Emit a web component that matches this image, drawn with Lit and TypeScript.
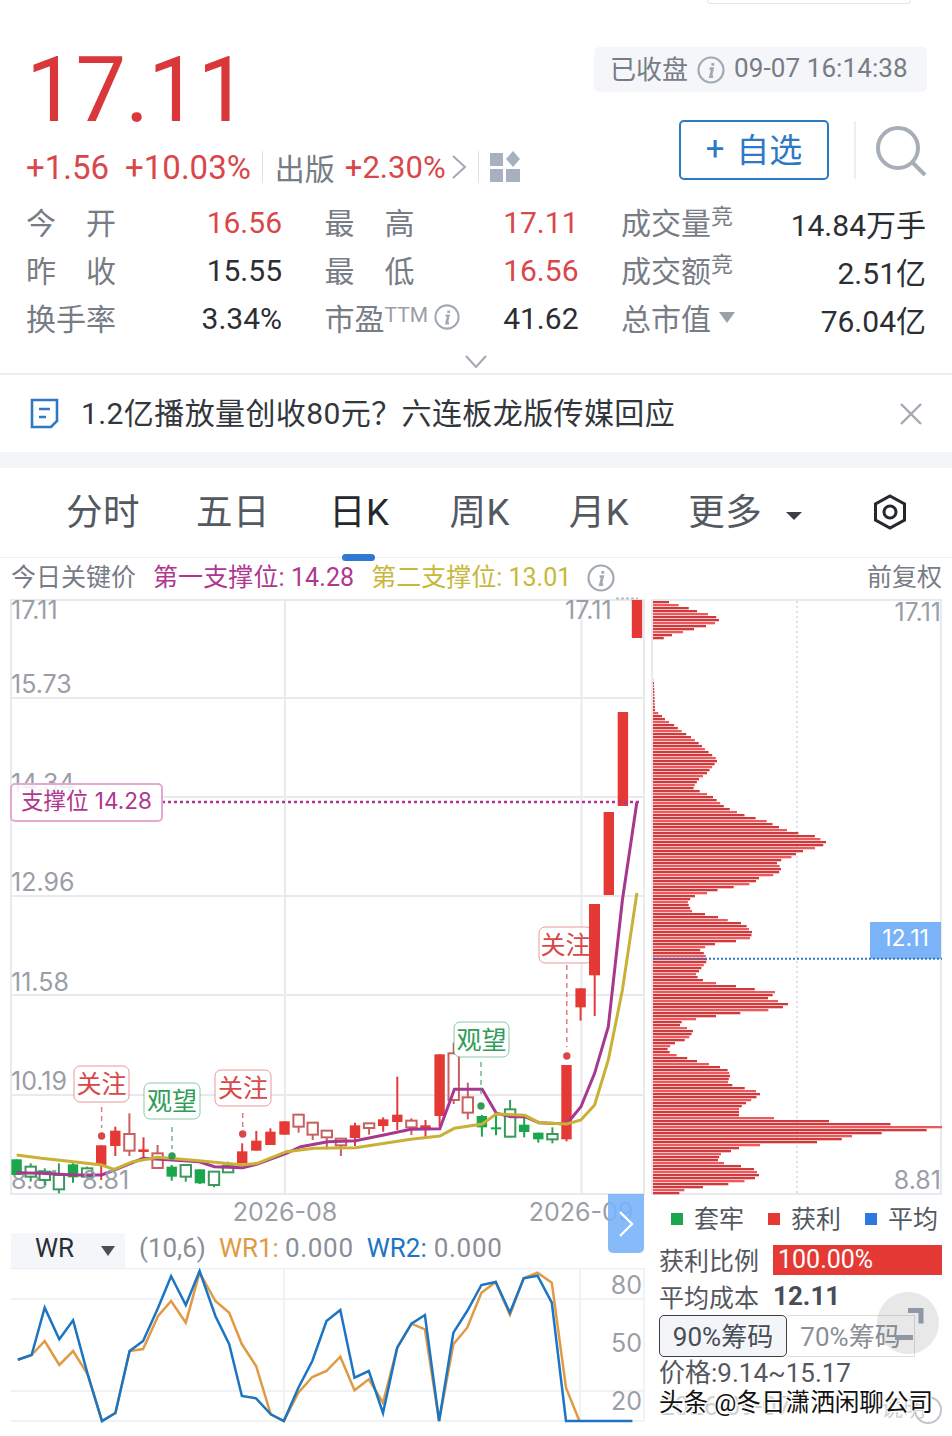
import { LitElement, html, css, svg } from 'lit';
import { customElement } from 'lit/decorators.js';

const RED = '#e53935';
const GREEN = '#1aa64b';

// px values below were read from the reference: y = 900 + py / 3
type Candle = [string, number, number, number, number];
const candles: Candle[] = [
  ['g', 778, 825, 778, 825],
  ['h', 800, 830, 790, 845],
  ['h', 815, 840, 805, 855],
  ['h', 825, 868, 790, 880],
  ['g', 793, 832, 790, 848],
  ['h', 805, 830, 800, 835],
  ['r', 736, 795, 736, 840],
  ['r', 692, 738, 680, 768],
  ['o', 702, 752, 640, 768],
  ['r', 748, 756, 712, 778],
  ['o', 760, 804, 735, 806],
  ['g', 800, 830, 795, 842],
  ['h', 795, 830, 795, 845],
  ['g', 808, 850, 808, 852],
  ['h', 815, 855, 815, 862],
  ['h', 797, 817, 785, 817],
  ['r', 754, 790, 730, 790],
  ['r', 722, 752, 693, 752],
  ['r', 695, 735, 685, 735],
  ['r', 664, 704, 664, 704],
  ['o', 644, 680, 644, 698],
  ['o', 668, 704, 668, 720],
  ['o', 692, 712, 692, 748],
  ['o', 716, 736, 716, 768],
  ['r', 676, 714, 668, 738],
  ['o', 670, 684, 670, 704],
  ['r', 658, 678, 652, 695],
  ['r', 644, 666, 530, 690],
  ['o', 662, 682, 655, 705],
  ['r', 676, 690, 660, 712],
  ['r', 463, 648, 463, 680],
  ['o', 460, 600, 428, 612],
  ['o', 592, 638, 548, 658],
  ['g', 648, 682, 645, 710],
  ['g', 682, 688, 640, 706],
  ['h', 628, 710, 600, 712],
  ['g', 674, 696, 645, 712],
  ['g', 698, 718, 698, 728],
  ['h', 702, 718, 682, 730],
  ['r', 495, 718, 495, 724],
  ['r', 265, 322, 265, 362],
  ['r', 12, 226, 12, 348],
  ['r', -264, -15, -264, -15],
  ['r', -564, -282, -564, -282],
  ['r', -900, -786, -900, -786],
];

const purple: number[][] = [[40, 818], [100, 820], [177, 825], [245, 825], [275, 810], [345, 775], [415, 780], [480, 785], [517, 800], [585, 803], [620, 792], [690, 760], [725, 740], [790, 725], [857, 722], [925, 705], [990, 688], [1060, 686], [1095, 568], [1162, 568], [1196, 640], [1231, 650], [1265, 650], [1299, 668], [1366, 672], [1400, 620], [1433, 520], [1466, 380], [1500, 0], [1535, -294]];
const yellow: number[][] = [[40, 765], [100, 775], [177, 785], [245, 795], [275, 808], [320, 785], [380, 772], [480, 782], [585, 795], [620, 790], [690, 755], [757, 745], [857, 743], [990, 718], [1060, 708], [1095, 685], [1162, 672], [1196, 642], [1265, 646], [1299, 668], [1366, 672], [1400, 660], [1433, 615], [1466, 480], [1500, 270], [1535, -21]];

// WR lines: x = px / 2.53, y = 1200 + py / 3
const wr2: number[][] = [[45, 476], [80, 462], [113, 320], [150, 415], [185, 358], [222, 520], [258, 660], [292, 636], [328, 450], [362, 420], [400, 320], [433, 226], [470, 312], [505, 210], [545, 345], [580, 430], [612, 585], [648, 592], [685, 640], [718, 660], [755, 560], [790, 480], [826, 360], [861, 327], [897, 530], [933, 510], [969, 636], [1005, 440], [1041, 368], [1075, 342], [1111, 660], [1147, 395], [1182, 330], [1218, 252], [1254, 243], [1290, 335], [1325, 232], [1360, 224], [1396, 305], [1432, 660], [1600, 660]];
const wr1: number[][] = [[45, 476], [80, 462], [113, 420], [150, 492], [185, 450], [222, 520], [258, 660], [292, 636], [328, 450], [362, 444], [400, 345], [433, 300], [470, 365], [505, 215], [545, 300], [580, 335], [612, 430], [648, 495], [685, 640], [718, 660], [755, 575], [790, 528], [826, 510], [861, 467], [897, 568], [933, 535], [969, 605], [1005, 440], [1041, 368], [1075, 385], [1111, 660], [1147, 430], [1182, 380], [1218, 275], [1254, 243], [1290, 342], [1325, 232], [1360, 215], [1396, 245], [1432, 560], [1466, 660]];

// chip profile as [real y, width]
const profile: number[][] = [
  [601, 10], [605, 22], [608, 33], [612, 44], [615, 55], [619, 66], [622, 62], [625, 53], [628, 41], [631, 30], [634, 19], [638, 8], [639, 0],
  [680, 0], [684, 1], [711, 2], [713, 4], [717, 9], [722, 14], [725, 20], [730, 26], [733, 30], [738, 38], [745, 47], [750, 52], [755, 58], [760, 64], [765, 60], [772, 54], [778, 46], [785, 41], [790, 40], [793, 50], [798, 60], [803, 66], [808, 72], [813, 84], [817, 94], [820, 107], [823, 117], [827, 122], [829, 130], [833, 138], [836, 160], [843, 173], [847, 162], [850, 150], [853, 143], [857, 137], [860, 124], [865, 124], [868, 128], [873, 125], [877, 106], [882, 101], [885, 87], [888, 68], [892, 54], [895, 42], [900, 34],
  [907, 36], [912, 39], [915, 52], [918, 65], [922, 78], [925, 93], [928, 94], [933, 99], [937, 97], [940, 83], [943, 62], [947, 49], [950, 46], [955, 52], [960, 54], [965, 50], [970, 46], [975, 41], [980, 47], [983, 56], [986, 77], [989, 95], [993, 122], [996, 115], [1000, 115], [1004, 135], [1008, 125], [1011, 96], [1014, 70], [1017, 49], [1020, 31], [1023, 24], [1027, 28], [1031, 40], [1035, 37], [1038, 35], [1042, 22], [1047, 14], [1052, 15], [1055, 20], [1058, 31], [1062, 44], [1066, 60], [1070, 74], [1075, 77], [1080, 75], [1085, 75], [1088, 88], [1092, 103], [1094, 107], [1098, 100], [1102, 93], [1107, 86], [1112, 86], [1117, 86], [1119, 121], [1122, 176], [1126, 258], [1128, 289], [1131, 243], [1134, 200], [1137, 197], [1141, 164], [1144, 107], [1147, 86], [1150, 78], [1153, 68], [1158, 65], [1162, 65], [1166, 77], [1168, 99], [1172, 103], [1175, 106], [1178, 100], [1182, 83], [1185, 60], [1187, 40], [1190, 27], [1193, 26],
];

function chipAt(y: number) {
  for (let i = 0; i < profile.length - 1; i++) {
    const [y0, w0] = profile[i];
    const [y1, w1] = profile[i + 1];
    if (y >= y0 && y <= y1) return w0 + ((w1 - w0) * (y - y0)) / (y1 - y0);
  }
  return 0;
}

// a row covers 3px, so take the widest value inside it or the peaks get lost
function chipWidth(y: number) {
  return Math.max(chipAt(y), chipAt(y + 1), chipAt(y + 2));
}

const mainPoints = (pts: number[][]) =>
  pts.map(([x, y]) => `${(x / 2.41).toFixed(1)},${(900 + y / 3).toFixed(1)}`).join(' ');
const wrPoints = (pts: number[][]) =>
  pts.map(([x, y]) => `${(x / 2.53).toFixed(1)},${(1200 + y / 3).toFixed(1)}`).join(' ');

const infoIcon = (size: number) => html`<svg class="info" width=${size} height=${size} viewBox="0 0 28 28">
  <circle cx="14" cy="14" r="12.5" fill="none" stroke="#a3a9b3" stroke-width="2.2"></circle>
  <path d="M15.8 7v2.8M12.6 12.6h2.9l-2 8h2.6" fill="none" stroke="#a3a9b3" stroke-width="2.8"></path>
</svg>`;

function marker(label: string, color: string, x0: number, x1: number, y0: number, y1: number, dash0: number, dash1: number, dotX: number, dotY: number) {
  return svg`
    <rect x=${x0} y=${y0} width=${x1 - x0} height=${y1 - y0} rx="6" fill="#fff" stroke=${color} stroke-opacity="0.55" stroke-width="1"></rect>
    <text class="mark" x=${(x0 + x1) / 2} y=${(y0 + y1) / 2 + 9} text-anchor="middle" fill=${color}>${label}</text>
    <line x1=${dotX} x2=${dotX} y1=${dash0} y2=${dash1} stroke=${color} stroke-width="1.5" stroke-dasharray="5 4" stroke-opacity="0.7"></line>
    <circle cx=${dotX} cy=${dotY} r="3.7" fill=${color}></circle>`;
}

@customElement('app-root')
export class AppRoot extends LitElement {
  static styles = css`
    :host {
      display: block;
      position: relative;
      width: 952px;
      height: 1436px;
      overflow: hidden;
      background: #fff;
      color: #333;
      font-family: Roboto, "Noto Sans CJK SC", sans-serif;
    }
    svg { display: block; }
    .info { flex: none; }
    .pill {
      width: 204px;
      height: 4px;
      margin-left: 707px;
      border: 1px solid #e4e6ea;
      border-top: none;
      border-radius: 0 0 10px 10px;
      box-sizing: border-box;
    }
    .head {
      height: 196px;
      padding: 0 25px 0 26px;
      display: flex;
      justify-content: space-between;
    }
    .left { padding-top: 42px; }
    .price {
      font-size: 90px;
      line-height: 90px;
      color: #d9373a;
      letter-spacing: -1px;
    }
    .change {
      margin-top: 11px;
      height: 40px;
      display: flex;
      align-items: center;
      font-size: 33px;
      color: #d9474a;
      white-space: nowrap;
    }
    .change .rate { margin-left: 16px; }
    .change .sub { font-size: 31px; }
    .vsep { width: 1px; height: 32px; background: #dfe1e5; margin: 0 12px 0 11px; }
    .vsep.tight { margin: 0 6px 0 11px; }
    .change .sector { color: #777c85; font-size: 30px; margin-right: 10px; }
    .change svg { margin-left: 5px; }
    .right {
      padding-top: 43px;
      display: flex;
      flex-direction: column;
      align-items: flex-end;
    }
    .chip {
      width: 333px;
      height: 45px;
      box-sizing: border-box;
      padding: 0 16px 4px;
      border-radius: 5px;
      background: #f4f6f9;
      display: flex;
      align-items: center;
      gap: 9px;
      font-size: 26px;
      color: #777c85;
      white-space: nowrap;
    }
    .chip .info { margin-top: 4px; }
    .chip .time { letter-spacing: 0.1px; }
    .actions {
      margin-top: 28px;
      height: 60px;
      display: flex;
      align-items: center;
    }
    .follow {
      width: 150px;
      height: 60px;
      box-sizing: border-box;
      border: 2px solid #2f78c4;
      border-radius: 5px;
      color: #2f78c4;
      font-size: 33px;
      padding-bottom: 4px;
      display: flex;
      align-items: center;
      justify-content: center;
      gap: 12px;
    }
    .actions .line { width: 2px; height: 58px; background: #eceef1; margin: 0 19px 0 25px; }
    .search { margin-top: 4px; }
    .stats {
      margin: -3px 0 3px;
      padding: 0 26px;
      display: grid;
      grid-template-columns: 256px 254px 305px;
      column-gap: 42.5px;
      grid-auto-rows: 48px;
      font-size: 30px;
      color: #2b2e33;
    }
    .cell { display: flex; align-items: center; justify-content: space-between; }
    .label { color: #777c85; display: flex; align-items: center; }
    .label.wide { width: 90px; justify-content: space-between; }
    .val { padding-top: 3px; }
    .val.up { color: #d9474a; }
    .sup { font-size: 22px; line-height: 1; align-self: flex-start; margin-top: 7px; }
    .ttm { font-size: 21px; color: #9a9ea6; align-self: flex-start; margin-top: 8px; margin-right: 6px; }
    .tri { width: 0; height: 0; border: 8px solid transparent; border-top: 11px solid #9ba1ab; border-bottom: none; margin-left: 8px; }
    .more {
      height: 31px;
      border-bottom: 2px solid #eceef1;
      display: flex;
      justify-content: center;
      align-items: center;
      padding-top: 6px;
      box-sizing: border-box;
    }
    .news {
      height: 77px;
      padding: 0 30px;
      display: flex;
      align-items: center;
      font-size: 30px;
      line-height: 40px;
      color: #33363b;
    }
    .news .txt { flex: 1; margin-left: 22px; letter-spacing: 0.4px; }
    .band { height: 16px; background: #f3f5f7; }
    .tabs {
      position: relative;
      height: 90px;
      box-sizing: border-box;
      padding: 0 0 0 66px;
      border-bottom: 1px solid #eceef1;
      display: flex;
      align-items: center;
      gap: 56px;
      font-size: 36.5px;
      letter-spacing: 0.5px;
      line-height: 44px;
      color: #54585f;
    }
    .tab.on { color: #26282c; position: relative; margin: 0 4px 0 3px; }
    .tab.on::after {
      content: "";
      position: absolute;
      left: 13px;
      right: 14px;
      bottom: -26px;
      height: 7px;
      border-radius: 4px;
      background: #2f78d4;
    }
    .tab.nudge { margin-left: 3px; }
    .moretab { display: flex; align-items: center; gap: 24px; }
    .moretab i { width: 0; height: 0; border: 8px solid transparent; border-top: 8px solid #3c3f45; border-bottom: none; margin-top: 6px; }
    .tabs svg { position: absolute; left: 873px; top: 26px; }
    .keys {
      height: 39px;
      padding: 0 10px 5px 11px;
      box-sizing: border-box;
      display: flex;
      align-items: center;
      font-size: 25px;
      color: #777c85;
    }
    .keys .k1 { margin-left: 17px; color: #b0378f; letter-spacing: 0.1px; }
    .keys .k2 { margin-left: 17px; color: #c8b83a; }
    .keys .info { margin-left: 16px; margin-top: 5px; }
    .keys .adj { margin-left: auto; }
    .market { display: flex; }
    .col-a { width: 650px; flex: none; }
    .col-b { flex: 1; }
    .wrbar {
      height: 35px;
      box-sizing: border-box;
      padding-bottom: 5px;
      display: flex;
      align-items: center;
      font-size: 26px;
      color: #8a8e96;
      margin-left: 11px;
    }
    .wrsel {
      width: 114px;
      height: 35px;
      margin-bottom: -5px;
      box-sizing: border-box;
      background: #f4f6f9;
      padding: 0 10px 5px 24px;
      display: flex;
      align-items: center;
      justify-content: space-between;
      color: #2b2e33;
      margin-right: 14px;
    }
    .wrsel i { width: 0; height: 0; border: 7px solid transparent; border-top: 10px solid #4a4e57; border-bottom: none; margin-top: 5px; }
    .wrbar .o { color: #e09a44; margin: 0 6px 0 13px; }
    .wrbar .b { color: #1b75c4; margin: 0 7px 0 13px; }
    .wrbar .num { letter-spacing: 0.7px; }
    .legend {
      height: 48px;
      box-sizing: border-box;
      padding: 0 0 8px 21px;
      display: flex;
      align-items: center;
      gap: 11px;
      font-size: 25px;
      color: #54585f;
      white-space: nowrap;
    }
    .legend i { width: 12px; height: 12px; flex: none; margin-top: 4px; }
    .legend span { margin-right: 13px; }
    .side { padding-left: 9px; color: #54585f; font-size: 25px; }
    .ratio { height: 30px; display: flex; align-items: center; gap: 14px; }
    .ratio span { padding-bottom: 3px; }
    .ratio b { font-weight: 400; color: #fff; background: #e53935; width: 169px; height: 30px; line-height: 30px; padding-left: 5px; box-sizing: border-box; }
    .cost { height: 38px; padding-top: 4px; box-sizing: border-box; display: flex; align-items: center; gap: 14px; }
    .cost b { font-weight: 700; font-size: 26px; color: #474c56; }
    .range { display: flex; height: 42px; margin-top: 2px; font-size: 26px; }
    .range div { width: 128px; padding-bottom: 3px; display: flex; align-items: center; justify-content: center; box-sizing: border-box; }
    .range .on { background: #f3f5f8; border: 1px solid #3c3f45; border-radius: 5px; color: #474c56; }
    .range .off { border: 1px solid #ddd; border-left: none; color: #8a8e96; }
    .span { height: 30px; padding-bottom: 4px; box-sizing: border-box; display: flex; align-items: center; font-size: 26px; }
    .tail {
      position: absolute;
      left: 660px;
      top: 1390px;
      display: flex;
      align-items: center;
      font-size: 26px;
      color: #cfd1d5;
      white-space: nowrap;
    }
    .tail .note { margin-left: 90px; font-size: 22px; }
    .mark-w {
      position: absolute;
      left: 659px;
      top: 1385px;
      font-size: 24.6px;
      line-height: 36px;
      color: #111;
      white-space: nowrap;
      text-shadow: 1px 1px 0 #fff, -1px -1px 0 #fff, 1px -1px 0 #fff, -1px 1px 0 #fff;
    }
    .ring { position: absolute; left: 914px; top: 1396px; width: 28px; height: 28px; box-sizing: border-box; border: 2px solid #c2c5ca; border-radius: 50%; }
    .slide {
      position: absolute;
      left: 608px;
      top: 1194px;
      width: 36px;
      height: 59px;
      background: #7ab3f8e6;
      border-radius: 0 0 5px 5px;
      display: flex;
      align-items: center;
      justify-content: center;
    }
    .float {
      position: absolute;
      left: 877px;
      top: 1292px;
      width: 62px;
      height: 62px;
      border-radius: 50%;
      background: #6d7078;
      opacity: 0.16;
    }
    .float-ic { position: absolute; left: 877px; top: 1292px; }
    .axis { font-family: Inter, sans-serif; font-size: 25px; fill: #9a9ea6; }
    .mark { font-size: 25px; }
    .tag { font-family: Inter, "Noto Sans CJK SC", sans-serif; font-size: 22.5px; fill: #b0378f; }
    .badge { font-family: Inter, sans-serif; font-size: 23px; fill: #fff; }
  `;

  renderGrid() {
    return svg`
      <g stroke="#e8eaee" stroke-width="2" fill="none">
        <rect x="11" y="600" width="633" height="594"></rect>
        ${[698, 797, 896, 995, 1095].map((y) => svg`<line x1="11" x2="644" y1=${y} y2=${y}></line>`)}
        <line x1="285" x2="285" y1="600" y2="1194"></line>
        <line x1="581.5" x2="581.5" y1="600" y2="1194"></line>
      </g>`;
  }

  renderCandles() {
    return candles.map(([kind, top, bottom, wickTop, wickBottom], i) => {
      const x = 16.6 + 14.1 * i;
      const y = (v: number) => 900 + v / 3;
      const solid = kind === 'r' || kind === 'g';
      const color = kind === 'r' ? RED : kind === 'g' ? GREEN : kind === 'o' ? '#c8605f' : '#3a9a5c';
      return svg`
        <line x1=${x} x2=${x} y1=${y(wickTop)} y2=${y(wickBottom)} stroke=${color} stroke-width="2"></line>
        <rect x=${x - 5.2} y=${y(top)} width="10.4" height=${(bottom - top) / 3}
          fill=${solid ? color : '#fff'} stroke=${solid ? 'none' : color} stroke-width=${solid ? 0 : 2}></rect>`;
    });
  }

  renderMain() {
    const labels: [string, number][] = [['17.11', 619], ['15.73', 693], ['14.34', 792], ['12.96', 891], ['11.58', 991], ['10.19', 1090], ['8.81', 1189]];
    return html`<svg width="650" height="636" viewBox="0 597 650 636">
      ${this.renderGrid()}
      ${labels.map(([t, y]) => svg`<text class="axis" x="11" y=${y}>${t}</text>`)}
      <text class="axis" x="565" y="619">17.11</text>
      <line x1="616" x2="638" y1="598.5" y2="598.5" stroke="#b9bcc2" stroke-width="2" stroke-dasharray="3 2"></line>
      ${this.renderCandles()}
      <polyline points=${mainPoints(purple)} fill="none" stroke="#a8388f" stroke-width="3"></polyline>
      <polyline points=${mainPoints(yellow)} fill="none" stroke="#c9b136" stroke-width="3"></polyline>
      <text class="axis" x="82" y="1189">8.81</text>
      ${marker('关注', '#d9474a', 74, 129, 1066, 1102, 1107, 1128, 101.6, 1136)}
      ${marker('观望', '#2f9d57', 144, 200, 1083, 1119, 1127, 1149, 172, 1156)}
      ${marker('关注', '#d9474a', 215, 271, 1070, 1106, 1113, 1128, 242.7, 1134)}
      ${marker('观望', '#2f9d57', 454, 509, 1022, 1057, 1062, 1097, 481, 1106)}
      ${marker('关注', '#d9474a', 539, 592, 927, 963, 965, 1047, 566.8, 1056)}
      <rect x="589" y="904" width="11" height="71" fill=${RED}></rect>
      <line x1="162" x2="642" y1="802" y2="802" stroke="#b0378f" stroke-width="2.4" stroke-dasharray="3 3"></line>
      <rect x="11" y="784" width="151" height="37" rx="4" fill="#fff" fill-opacity="0.85" stroke="#e3a9d0" stroke-width="2"></rect>
      <text class="tag" x="21" y="809">支撑位 14.28</text>
      <text class="axis" x="285" y="1221" text-anchor="middle">2026-08</text>
      <text class="axis" x="581" y="1221" text-anchor="middle">2026-09</text>
    </svg>`;
  }

  renderWr() {
    return html`<svg width="650" height="158" viewBox="0 1267 650 158">
      <g stroke="#eceef1" stroke-width="1.5" fill="none">
        <line x1="11" x2="644" y1="1267.5" y2="1267.5"></line>
        <line x1="11" x2="644" y1="1298" y2="1298"></line>
        <line x1="11" x2="644" y1="1390" y2="1390"></line>
        <line x1="11" x2="644" y1="1420" y2="1420"></line>
        <line x1="284" x2="284" y1="1267" y2="1420"></line>
        <line x1="580" x2="580" y1="1267" y2="1420"></line>
        <line x1="644" x2="644" y1="1267" y2="1420"></line>
      </g>
      ${[['80', 1293], ['50', 1351], ['20', 1409]].map(([t, y]) => svg`<text class="axis" x="642" y=${y} text-anchor="end">${t}</text>`)}
      <polyline points=${wrPoints(wr1)} fill="none" stroke="#e09a44" stroke-width="2.5"></polyline>
      <polyline points=${wrPoints(wr2)} fill="none" stroke="#1b75c4" stroke-width="2.5"></polyline>
    </svg>`;
  }

  renderChips() {
    const rows = [];
    for (let y = 601, i = 0; y < 1194; y += 3, i++) {
      const w = chipWidth(y);
      if (w > 0) rows.push(svg`<rect x="653" y=${y} width=${w} height="2.3" fill=${i % 3 === 1 ? '#f0595b' : '#d13a3c'}></rect>`);
    }
    return html`<svg width="302" height="600" viewBox="650 597 302 600">
      <rect x="652" y="600" width="289" height="594" fill="none" stroke="#e8eaee" stroke-width="2"></rect>
      <line x1="797" x2="797" y1="601" y2="1193" stroke="#dcdfe4" stroke-width="2" stroke-dasharray="2 3"></line>
      ${rows}
      <text class="axis" x="941" y="621" text-anchor="end">17.11</text>
      <text class="axis" x="941" y="1189" text-anchor="end">8.81</text>
      <rect x="870" y="922" width="71" height="37" fill="#7ab3f8"></rect>
      <text class="badge" x="905.5" y="946" text-anchor="middle">12.11</text>
      <line x1="653" x2="942" y1="958.7" y2="958.7" stroke="#2f78c4" stroke-width="2" stroke-dasharray="2 2"></line>
    </svg>`;
  }

  render() {
    return html`
      <div class="pill"></div>
      <div class="head">
        <div class="left">
          <div class="price">17.11</div>
          <div class="change">
            <span>+1.56</span><span class="rate">+10.03%</span>
            <span class="vsep"></span>
            <span class="sector">出版</span><span class="sub">+2.30%</span>
            <svg width="16" height="26" viewBox="0 0 16 26"><path d="M2 2l12 11L2 24" fill="none" stroke="#a3a9b3" stroke-width="2"></path></svg>
            <span class="vsep tight"></span>
            <svg width="32" height="32" viewBox="0 0 32 32" fill="#a8b0c0">
              <rect x="0" y="2" width="13" height="13"></rect>
              <rect x="0" y="18" width="13" height="13"></rect>
              <rect x="16" y="18" width="14" height="13"></rect>
              <path d="M23 0l7 8-7 8-7-8z"></path>
            </svg>
          </div>
        </div>
        <div class="right">
          <div class="chip"><span>已收盘</span>${infoIcon(28)}<span class="time">09-07 16:14:38</span></div>
          <div class="actions">
            <div class="follow"><span>+</span><span>自选</span></div>
            <div class="line"></div>
            <svg class="search" width="52" height="54" viewBox="0 0 52 54" fill="none" stroke="#a8aeb8" stroke-width="4">
              <circle cx="23" cy="23" r="20"></circle>
              <path d="M37 37l13 13"></path>
            </svg>
          </div>
        </div>
      </div>

      <div class="stats">
        <div class="cell"><span class="label wide"><span>今</span><span>开</span></span><span class="val up">16.56</span></div>
        <div class="cell"><span class="label wide"><span>最</span><span>高</span></span><span class="val up">17.11</span></div>
        <div class="cell"><span class="label">成交量<span class="sup">竞</span></span><span class="val">14.84万手</span></div>
        <div class="cell"><span class="label wide"><span>昨</span><span>收</span></span><span class="val">15.55</span></div>
        <div class="cell"><span class="label wide"><span>最</span><span>低</span></span><span class="val up">16.56</span></div>
        <div class="cell"><span class="label">成交额<span class="sup">竞</span></span><span class="val">2.51亿</span></div>
        <div class="cell"><span class="label">换手率</span><span class="val">3.34%</span></div>
        <div class="cell"><span class="label">市盈<span class="ttm">TTM</span>${infoIcon(26)}</span><span class="val">41.62</span></div>
        <div class="cell"><span class="label">总市值<span class="tri"></span></span><span class="val">76.04亿</span></div>
      </div>

      <div class="more">
        <svg width="22" height="14" viewBox="0 0 22 14"><path d="M1 1l10 11L21 1" fill="none" stroke="#a3a9b3" stroke-width="2"></path></svg>
      </div>

      <div class="news">
        <svg width="29" height="31" viewBox="0 0 29 31" fill="none" stroke="#2f78c4" stroke-width="2.6">
          <path d="M2 2h25v21l-6 6H2z"></path>
          <path d="M9 11h11M9 19h7"></path>
        </svg>
        <span class="txt">1.2亿播放量创收80元？六连板龙版传媒回应</span>
        <svg width="22" height="22" viewBox="0 0 22 22"><path d="M1 1l20 20M21 1L1 21" stroke="#a3a9b3" stroke-width="2.4"></path></svg>
      </div>
      <div class="band"></div>

      <div class="tabs">
        <span class="tab">分时</span>
        <span class="tab">五日</span>
        <span class="tab on">日K</span>
        <span class="tab">周K</span>
        <span class="tab nudge">月K</span>
        <span class="tab moretab nudge">更多<i></i></span>
        <svg width="34" height="36" viewBox="0 0 34 36" fill="none" stroke="#26282c" stroke-width="3">
          <path d="M17 2l14.5 8v16L17 34 2.5 26V10z"></path>
          <circle cx="17" cy="18" r="6"></circle>
        </svg>
      </div>

      <div class="keys">
        <span>今日关键价</span>
        <span class="k1">第一支撑位: 14.28</span>
        <span class="k2">第二支撑位: 13.01</span>
        ${infoIcon(28)}
        <span class="adj">前复权</span>
      </div>

      <div class="market">
        <div class="col-a">
          ${this.renderMain()}
          <div class="wrbar">
            <div class="wrsel"><span>WR</span><i></i></div>
            <span>(10,6)</span>
            <span class="o">WR1:</span><span class="num">0.000</span>
            <span class="b">WR2:</span><span class="num">0.000</span>
          </div>
          ${this.renderWr()}
        </div>
        <div class="col-b">
          ${this.renderChips()}
          <div class="legend">
            <i style="background:#1aa64b"></i><span>套牢</span>
            <i style="background:#e53935"></i><span>获利</span>
            <i style="background:#2f78e0"></i><span>平均</span>
          </div>
          <div class="side">
            <div class="ratio"><span>获利比例</span><b>100.00%</b></div>
            <div class="cost"><span>平均成本</span><b>12.11</b></div>
            <div class="range"><div class="on">90%筹码</div><div class="off">70%筹码</div></div>
            <div class="span">价格:9.14~15.17</div>
          </div>
        </div>
      </div>

      <div class="slide">
        <svg width="16" height="28" viewBox="0 0 16 28"><path d="M2 2l12 12L2 26" fill="none" stroke="#fff" stroke-width="2.4"></path></svg>
      </div>
      <div class="float"></div>
      <svg class="float-ic" width="62" height="62" viewBox="0 0 62 62" fill="none" stroke="#8f96a6" stroke-width="5">
        <path d="M31 18.5h13v13"></path>
        <path d="M18 45.5h18"></path>
      </svg>
      <div class="tail"><span>2026-09-07</span><span class="note">说明</span></div>
      <div class="ring"></div>
      <div class="mark-w">头条 @冬日潇洒闲聊公司</div>
    `;
  }
}
